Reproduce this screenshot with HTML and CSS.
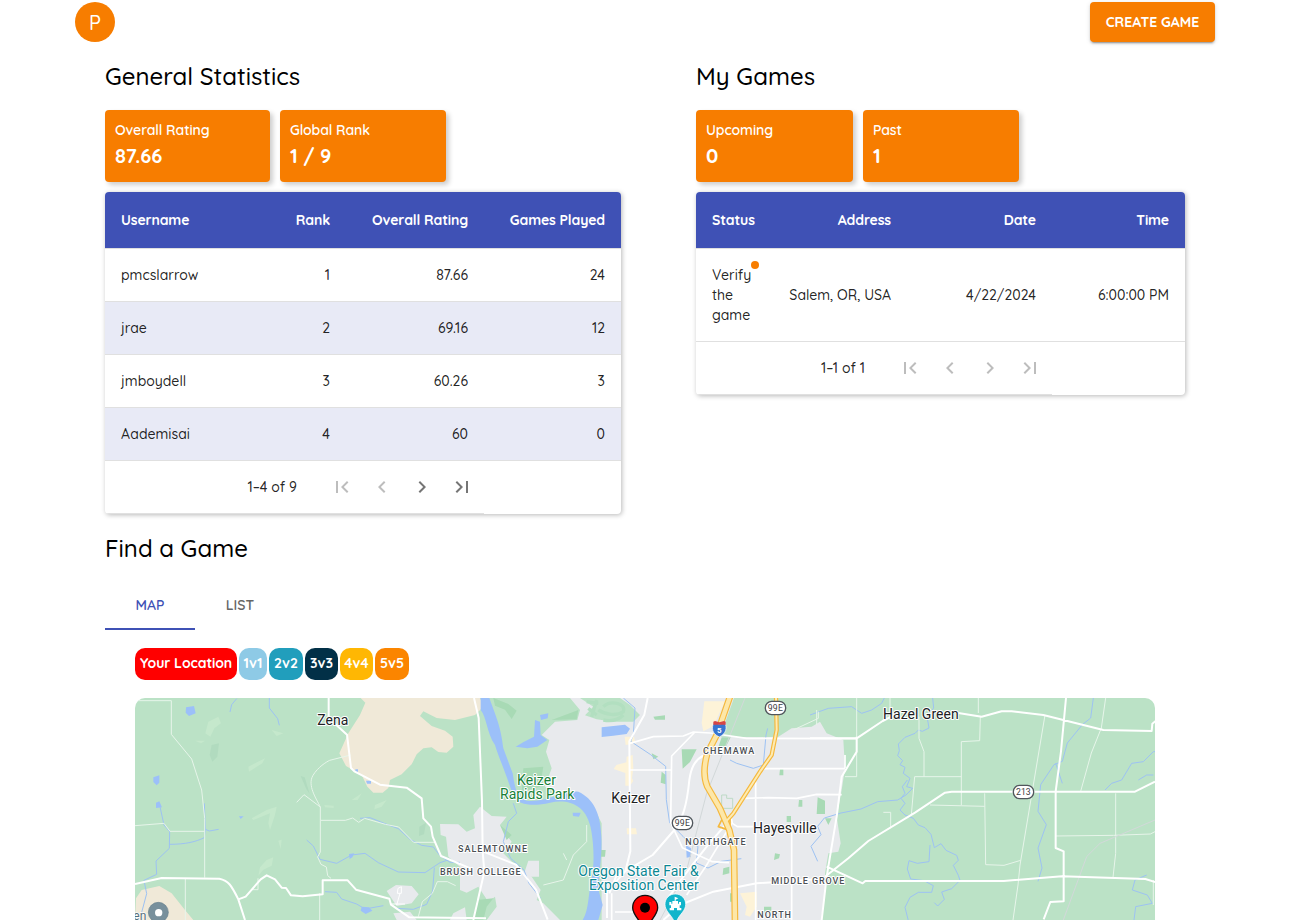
FILE: index.html
```html
<!DOCTYPE html>
<html lang="en">
<head>
<meta charset="utf-8">
<title>Player Dashboard</title>
<link rel="stylesheet" href="styles.css">
</head>
<body>
<svg width="0" height="0" class="sprite" aria-hidden="true">
  <symbol id="first" viewBox="0 0 24 24"><path d="M18.41 16.59L13.82 12l4.59-4.59L17 6l-6 6 6 6zM6 6h2v12H6z"/></symbol>
  <symbol id="prev" viewBox="0 0 24 24"><path d="M15.41 16.59L10.83 12l4.58-4.59L14 6l-6 6 6 6z"/></symbol>
  <symbol id="next" viewBox="0 0 24 24"><path d="M8.59 16.59L13.17 12 8.59 7.41 10 6l6 6-6 6z"/></symbol>
  <symbol id="last" viewBox="0 0 24 24"><path d="M5.59 7.41L10.18 12l-4.59 4.59L7 18l6-6-6-6zM16 6h2v12h-2z"/></symbol>
</svg>
<header class="topbar">
  <div class="avatar">P</div>
  <button class="create">CREATE GAME</button>
</header>
<main class="content">
  <div class="panels">
    <section>
      <h2 class="title">General Statistics</h2>
      <div class="cards cards-left">
        <div class="card"><span class="label">Overall Rating</span><strong>87.66</strong></div>
        <div class="card"><span class="label">Global Rank</span><strong>1 / 9</strong></div>
      </div>
      <div class="table ranks">
        <div class="row head"><span>Username</span><span>Rank</span><span>Overall Rating</span><span>Games Played</span></div>
        <div class="row"><span>pmcslarrow</span><span>1</span><span>87.66</span><span>24</span></div>
        <div class="row tint"><span>jrae</span><span>2</span><span>69.16</span><span>12</span></div>
        <div class="row"><span>jmboydell</span><span>3</span><span>60.26</span><span>3</span></div>
        <div class="row tint"><span>Aademisai</span><span>4</span><span>60</span><span>0</span></div>
        <div class="pager pager-left"><span>1–4 of 9</span>
          <button class="nav off"><svg><use href="#first"/></svg></button><button class="nav off"><svg><use href="#prev"/></svg></button><button class="nav"><svg><use href="#next"/></svg></button><button class="nav"><svg><use href="#last"/></svg></button>
        </div>
      </div>
    </section>
    <section>
      <h2 class="title">My Games</h2>
      <div class="cards cards-right">
        <div class="card"><span class="label">Upcoming</span><strong>0</strong></div>
        <div class="card"><span class="label">Past</span><strong>1</strong></div>
      </div>
      <div class="table games">
        <div class="row head"><span>Status</span><span>Address</span><span>Date</span><span>Time</span></div>
        <div class="row tall"><span><span class="status">Verify<br>the<br>game<i class="dot"></i></span></span><span>Salem, OR, USA</span><span>4/22/2024</span><span>6:00:00 PM</span></div>
        <div class="pager pager-right"><span>1–1 of 1</span>
          <button class="nav off"><svg><use href="#first"/></svg></button><button class="nav off"><svg><use href="#prev"/></svg></button><button class="nav off"><svg><use href="#next"/></svg></button><button class="nav off"><svg><use href="#last"/></svg></button>
        </div>
      </div>
    </section>
  </div>
  <h2 class="title">Find a Game</h2>
  <nav class="tabs"><span class="tab active">MAP</span><span class="tab">LIST</span></nav>
  <div class="legend"><span class="chip you">Your Location</span><span class="chip one">1v1</span><span class="chip two">2v2</span><span class="chip three">3v3</span><span class="chip four">4v4</span><span class="chip five">5v5</span></div>
  <svg class="map" viewBox="15 24 3060 666">
    <rect x="15" y="24" width="3060" height="666" fill="#bbe2c6"/>
    <!-- subtle relief -->
    <g fill="#c5e8cc">
      <path d="M235 95l30-15 8 20-20 15-12 25-15-10zM355 230l50-25-8 15-40 25zM365 385l45-25 30-10-5 25-15 45-5-20 5-30-50 20zM410 510l20-8-5 25-25 12-15 18 5-25zM735 345l35-15-15 20-22 8zM195 152h30l-12 8zM445 452l10-3-3 28zM425 120l35 10-20 8zM665 330l30-20-12 20zM583 345l28 2v7l-26-2z"/>
    </g>
    <g fill="#b1dbbf"><path d="M245 165l22-5-5 40-15 15-8-20zM512 258l12 4 15 50-10-15zM868 410l20-12-6 35-15 5z"/></g>
    <!-- farmland -->
    <g fill="#f0e9d8">
      <path d="M692 24L706 38 690 75 655 130 628 190 648 228 695 255 712 290 730 308 758 308 775 294 780 270 815 253 845 223 860 193 880 175 905 172 925 186 950 188 970 170 968 140 945 122 905 108 870 78 880 64 920 84 975 90 1035 75 1060 50 1050 24z"/>
      <path d="M18 625L35 600 88 588 125 610 165 660 190 690H15z"/>
    </g>
    <!-- built-up land -->
    <g fill="#e8eaed">
      <path d="M1050 350L1030 375 1035 415 1010 425 985 403 930 402 932 435 948 440 955 500 990 530 990 600 1010 608 1045 590 1075 635 1095 620 1100 650 1070 690H1290L1240 640 1220 630 1232 600 1205 560 1150 520 1120 490 1145 455 1125 430 1110 405 1130 380 1085 378z"/>
      <path d="M770 603L798 585 845 588 866 613 845 640 800 648zM1195 512h32v48h-48zM790 670l50-5 20 25h-60zM960 690l10-20 35-18 5 38z"/>
      <path d="M1470 24L1500 45 1530 75 1510 95 1450 95 1400 88 1365 76 1390 50 1350 24H1320L1350 60 1342 90 1275 95 1250 120 1235 135 1258 150 1248 185 1265 235 1245 290 1285 310 1340 310 1390 350 1415 400 1415 690H2073L2085 600 2085 550 2095 490 2125 485 2132 460 2120 380 2135 300 2145 235 2140 150 2090 130 2070 95 2045 110 1985 115 1945 140 1880 142 1770 140 1812 24z"/>
    </g>
    <!-- commercial patches -->
    <g fill="#fdf3d8">
      <path d="M1723 34h62l-35 75-30 15-5-25zM1484 140h28l5 20-30 5zM1490 200l18-5 2 40-4 30 4 8-10 14h-14v-38l-35-12 8-12 30-8zM1490 415h28l3 18h-30zM1830 610l50-5v45l-20 30-15-5 5-25z"/>
    </g>
    <!-- parks -->
    <g fill="#a8dab5">
      <path d="M1090 24l45 18 25 20-15 25-20-28-30-12zM1180 235l60-5-10 60-55 15zM1265 90l80-30-5 28zM1655 178h45l-20 38-22 20zM1775 142h27l-15 30-25 8zM1595 245l12 10v28l-15-5zM1570 80l35-4v13h-30zM1565 190l20 10-15 8zM1950 238h10v18h-12zM2007 330h10v20h-12zM2063 322l22 10v40h-25zM1970 378h13v18h-13zM1935 490l15 3-3 12-15 5zM1780 535l18-5v20l-20 5zM1412 480h15l-2 20h-12zM1040 630l50-5-20 25-10 40h-30zM1800 610h10v25h-10zM1902 650h22v20h-22z"/>
      <path d="M2085 385h20l-10 20zM1110 405l35 30-15 15z"/>
    </g>
    <path d="M1370 35l35 5m-30 15l25 20m0-45l-15 50m35-30c20-20 70-12 60 15-20 15-55 8-75-5m15 30c25 5 45 0 60-15" fill="none" stroke="#b2dfc0" stroke-width="10"/>
    <!-- water -->
    <g fill="#9cc0f9">
      <path d="M1052 24H1078C1102 90 1112 110 1120 175L1148 250C1155 295 1160 325 1190 332 1255 338 1295 300 1345 305 1390 325 1412 370 1414 440 1418 510 1400 575 1407 605L1418 645 1405 690H1358C1378 660 1375 600 1385 570 1397 500 1387 430 1380 405 1365 345 1315 325 1260 338 1210 350 1165 345 1150 320 1125 240 1105 200 1095 165 1070 130 1070 80 1052 60z"/>
      <path d="M1215 90l15 5 2 40 20 15-30 20-30 5-35-5 25-15 30-15zM1415 112l70-8 15 12-10 16-40 5-35 4v-26zM1230 75l25-5-2 15-20 5zM1328 368h24l-5 12-18-2zM1668 465l15 10v25l-13 3zM695 650l22 2 10 10-20 10-15-10zM168 52l24-4 5 22-20 8-10-10zM70 262l18-6v22l-8 8-10-10zM78 338l10-4 8 18-18 2zM657 492l16-2-6 12-8 5zM708 272h15v9h-12zM327 379h14l-9 8zM676 238h8v7h-8z"/>
    </g>
    <g fill="none" stroke="#9dc2f3" stroke-width="3" stroke-linejoin="round">
      <path d="M90 350l12 55 17 20-1 50-40 38 2 40-38 18 8 40-16 60M118 463c50 0 80-8 105-20l3-25 12 5 28-5M226 420l-3-80M320 26l-15 18-5 22M418 24v30l25 32 5 20M530 450l20 18 20 40 50 12 45-25 40-5 40 28 60 28 80 2 45-30 30-10M690 385l30-2 45 18 40 15 35 32 35 18 35 5 20 26 30 20 30 0M585 605l35 2 15 20 45 15 25 15 55-10M800 655l50 3 40-15 18-40 5-70"/>
      <path d="M1150 340l10 30-25 25-15 60 22 50 40 35 15 40 35 45M1480 24l35 30-5 80-8 20 60 40 45 35 2 100 10 70 40 40 20 20 25 10-5 50 35 15 40-20 60-8M1800 210l20 10 50 15 30-10 8-90 5-20M2040 75l55-20 70-5 30 20 30-10 30-20 10-20"/>
      <path d="M2408 24l3 30-20 25 6 35-20 10-12-4-10 10-30 12-20 20 3 20-5 15 15 15-8 12 15 8-5 18 20 15-10 25 18 5-20 20-25 15-60 5-50 22-60 12-50 15-20 25 10 25-30 35 20 45M2332 270l-15 20 8 20-12 15 12 15-15 20 15 15 25 10 15 20 20 8 18 20 10 40 20-12 15 20 32 15 5 15-15 15 15 30 5 15-25 25-30 10 8 22-20 20-10-10M2400 465l-3 50-35 5-25-8-5 25 10 30 40 5 28 15-5 20-40 0-25 15-15 30 10 40M2890 24l-8 60-25 20-45 55-15 55-25 10-40 60-8 80 25 40-25 70 12 60-12 40M2777 220l20 60M2925 300l20-20 30-10 30-50 35-5 30-30h30M3025 270l25-15h20M3050 555l-35 15-8 30 45 15 15 25-50 10-5 40"/>
    </g>
    <!-- local roads -->
    <g fill="none" stroke="#e7f5ea" stroke-width="3">
      <path d="M15 32H124V133L185 207 215 300 224 385V563M15 407L102 400 120 424H224M166 565V690M384 565v34h-18M500 337l22-23 49 37M571 351c-12-25-40-65-22-95 15-25 40-40 50-45l63-16M571 351v40h75l22-7 18 13 18-12 62 18 40 8 45 46h65M571 391v95l-8 15 10 22 16 8 4 26 10 8M569 610v80M865 680l12-45 30-25 15-35h30l25 12"/>
      <path d="M2180 24V260h-35M2280 24v40M2545 24v45M2367 80v65l15 40v75M2494 260h-140l-10 115M2551 80l-2 72-55 3v190M2400 345l164 4M2564 310l3 214 55 2 50-15M2745 75l-75 450-6 60-15 105M2927 24l-13 90-30 75-32 115M2776 438l175-2 110-4 20-10M2957 310v180l-8 72M2260 367h22v48M2060 60v45M1990 120l75-35v-20M3070 570v75"/>
      <path d="M1370 405v50l-40 40-30 75-60 15M1300 490l10 20"/>
    </g>
    <g fill="none" stroke="#d2d8d9" stroke-width="3"><path d="M1845 24L1730 310 1670 540 1590 690M2800 690l70-190 40-40 165-70"/><path d="M1775 315h15v10h18v30h-33z" stroke="#bddac6"/></g>
    <g fill="none" stroke="#fff" stroke-width="3" stroke-linejoin="round"><path d="M804 595l10-5v20h-12zM810 610l-10 35M780 642h45"/></g>
    <g fill="none" stroke="#fff" stroke-width="5" stroke-linejoin="round">
      <path d="M1500 160l70-20 90-2 30-12 50 3 110 16 330 1M1695 126l-70 72-3 200 35 75 90 42 50 3M1497 240h125M1900 236h245M1840 325l75-2 85 2 60-12 75 1M1877 275v415M1985 410v280M1877 410h-55l-15-10-5-25M2145 235v-40"/>
      <path d="M1445 690V610M1455 666h70M1670 615l60-90 75-125"/>
    </g>
    <!-- main roads -->
    <g fill="none" stroke="#fff" stroke-width="6" stroke-linejoin="round">
      <path d="M596 24v60l55 50 12 100 10 10 77 40 80 9 45 32 5 60 23 25 5 30 25 58 90 38M15 582l80-18 173 2c28 6 36 20 57 62l20 62M325 628l22-8 45-52 18-12 25 12 20 25 13 1 15 22 35 3 60-6V571h75l25 28 100 27 5 18 55 38 230 3"/>
      <path d="M1032 24l14 60 10 250 2 150 100 40 60 75 35 90M1058 485l5 60-33 145M1553 24l-10 50-45 80 3 330-15 60-55 60v80M1723 195c-30 15-40 40-45 75-8 80-20 115-45 150l-65 75-110 65-20 50M1600 690l50-45 100-40 130-25 180-12M1790 400l-60 70-70 90-50 70"/>
      <path d="M2040 145h140l78-52 45-23M2485 69l70 11 60-16 30 0 95 11 180 45 145 3 2-22 15-12M2808 24l-15 160-16 120v170l24 10v150l-40 2-20 52M3075 275l-60 30H2465l-20 3-90 60-140 85-60 52-70 55M2075 690l15-130 30-180 15-120 45-75v-45M2090 530l108 50 8-7h415l175-14 250 8 32 10"/>
    </g>
    <!-- highways -->
    <g fill="none" stroke-linejoin="round" stroke-linecap="round">
      <path d="M1800 20L1760 135 1732 190Q1715 250 1732 290L1770 355 1798 420 1812 480 1815 700" stroke="#f5b83d" stroke-width="20"/>
      <path d="M1938 20l2 100-15 75-35 50-80 125-22 25" stroke="#f5b83d" stroke-width="13"/>
      <path d="M1775 390l-10 20 25 8M1800 380v30" stroke="#f5b83d" stroke-width="5"/>
      <path d="M1938 20l2 100-15 75-35 50-80 125-22 25" stroke="#fdebb2" stroke-width="6"/>
      <path d="M1800 20L1760 135 1732 190Q1715 250 1732 290L1770 355 1798 420 1812 480 1815 700" stroke="#fde7a8" stroke-width="13"/>
    </g>
    <!-- shields -->
    <g fill="#fff" stroke="#50565c" stroke-width="4">
      <rect x="1906" y="34" width="61" height="40" rx="19"/><rect x="1627" y="379" width="61" height="40" rx="19"/><rect x="2650" y="286" width="61" height="40" rx="19"/>
    </g>
    <path d="M1751 98q17 8 34 0c6 15 5 32-17 43-24-11-23-28-17-43z" fill="#3875d0" stroke="#fff" stroke-width="2"/><path d="M1750 95l5-2 13 4 14-4 5 2v9h-37z" fill="#d64545"/>
    <g class="shield">
      <text x="1936" y="63" textLength="45">99E</text><text x="1657" y="408" textLength="45">99E</text><text x="2680" y="315" textLength="44">213</text>
      <text x="1768" y="130" class="five-text">5</text>
    </g>
    <g class="town">
      <text x="562" y="105" textLength="93">Zena</text><text x="1444" y="339" textLength="116">Keizer</text><text x="1869" y="430" textLength="191">Hayesville</text><text x="2259" y="87" textLength="227">Hazel Green</text>
    </g>
    <g class="park"><text x="1161" y="285" textLength="117">Keizer</text><text x="1110" y="327" textLength="223">Rapids Park</text></g>
    <g class="poi"><text x="1345" y="559" textLength="361">Oregon State Fair &amp;</text><text x="1377" y="600" textLength="329">Exposition Center</text></g>
    <g class="district">
      <text x="984" y="486" textLength="207">SALEMTOWNE</text><text x="930" y="555" textLength="242">BRUSH COLLEGE</text><text x="1719" y="192" textLength="154">CHEMAWA</text><text x="1666" y="465" textLength="181">NORTHGATE</text><text x="1924" y="582" textLength="219">MIDDLE GROVE</text><text x="1882" y="684" textLength="101">NORTH</text>
    </g>
    <text x="10" y="689" class="partial">en</text>
    <circle cx="85" cy="667" r="30" fill="#78909c" stroke="#657f8c" stroke-width="2"/><circle cx="86" cy="668" r="11" fill="#fff"/>
    <path d="M1545 616c-21 0-37 16-37 37 0 15 11 27 21 42h33c10-15 21-27 21-42 0-21-17-37-38-37z" fill="#f00" stroke="#111" stroke-width="4"/><circle cx="1545" cy="653" r="15"/>
    <path d="M1636 612c-18 0-31 13-31 31 0 20 18 30 27 50h8c8-20 27-30 27-50 0-18-13-31-31-31z" fill="#12b5cb" stroke="#fff" stroke-width="2"/>
    <path d="M1618 636h6v5h23v-5h6v10h-4v8h5v7h-13v-7h-9v7h-13v-7h4v-8h-5zM1627 641v-8h17v8zM1634 633v-13l11 5-8 4v4z" fill="#fff"/>
  </svg>
</main>
</body>
</html>
```
FILE: styles.css
```css
* { box-sizing: border-box; }
html, body { height: 920px; overflow: hidden; }
body { margin: 0; background: #fff; color: #000; font-family: Quicksand, Lato, "Open Sans", sans-serif; font-size: 14px; }
button { font: inherit; border: 0; padding: 0; background: none; }
.sprite { display: block; }
.topbar { display: flex; justify-content: space-between; padding: 2px 84px 0 75px; height: 60px; }
.avatar { width: 40px; height: 40px; border-radius: 50%; background: #f77d00; color: #fff; display: grid; place-items: center; font-size: 20px; font-weight: 500; }
.create { width: 125px; height: 40px; border-radius: 4px; background: #f77d00; color: #fff; font-weight: 700; box-shadow: 0 3px 1px -2px rgba(0,0,0,.2), 0 2px 2px rgba(0,0,0,.14), 0 1px 5px rgba(0,0,0,.12); }
.content { padding: 0 114px 0 105px; }
.panels { display: grid; grid-template-columns: 516px 489px; justify-content: space-between; height: 472px; }
.title { margin: 0; font-size: 24px; line-height: 32px; font-weight: 500; white-space: nowrap; }
.cards { display: grid; gap: 10px; padding: 18px 0 10px; }
.cards-left { grid-template-columns: 165px 166px; }
.cards-right { grid-template-columns: 157px 156px; }
.card { height: 72px; padding: 10px; background: #f77d00; color: #fff; border-radius: 4px; box-shadow: 3px 3px 5px rgba(0,0,0,.2); display: flex; flex-direction: column; }
.label { line-height: 20px; font-weight: 600; letter-spacing: -.1px; }
.card strong { font-size: 20px; line-height: 32px; letter-spacing: -.1px; }
.table { border-radius: 4px; overflow: hidden; box-shadow: 1px 1px 5px rgba(0,0,0,.28); color: rgba(0,0,0,.87); background: #fff; font-weight: 500; line-height: 20px; }
.row { display: grid; height: 53px; align-items: center; border-bottom: 1px solid #e0e0e0; text-align: right; }
.row > span { padding: 0 16px; white-space: nowrap; }
.row > span:first-child { text-align: left; }
.ranks .row { grid-template-columns: 120px 121px 138px 137px; }
.games .row { grid-template-columns: 77px 134px 145px 133px; }
.row.head { height: 57px; background: #3f51b5; background-clip: padding-box; color: #fff; font-weight: 700; letter-spacing: -.12px; }
.row.tint { background: #e8eaf6; }
.row.tall { height: 93px; }
.status { position: relative; display: inline-block; }
.dot { position: absolute; width: 8px; height: 8px; border-radius: 50%; background: #f77d00; right: -8px; top: -4px; }
.pager { display: flex; height: 53px; align-items: center; justify-content: flex-end; border-bottom: 1px solid #e0e0e0; padding-right: 2px; }
.pager span { margin-right: 25px; }
.pager-left { width: 379px; }
.pager-right { width: 356px; }
.nav { width: 40px; height: 40px; display: grid; place-items: center; color: #757575; }
.nav.off { color: #bdbdbd; }
.nav svg { width: 24px; height: 24px; fill: currentColor; }
.tabs { display: flex; margin-top: 17px; }
.tab { width: 90px; height: 49px; line-height: 49px; text-align: center; color: #666; font-weight: 600; }
.tab.active { color: #3f51b5; border-bottom: 2px solid #3f51b5; }
.legend { display: flex; gap: 2px; padding: 18px 0 18px 30px; }
.chip { height: 32px; line-height: 30px; border-radius: 10px; color: #fff; font-weight: 700; text-align: center; width: 34px; white-space: nowrap; }
.chip.you { width: 102px; background: #f00; letter-spacing: -.1px; }
.chip.one { width: 28px; background: #8ecae6; }
.chip.two { background: #219ebc; }
.chip.three { width: 33px; background: #023047; }
.chip.four { width: 33px; background: #ffb703; }
.chip.five { background: #fb8500; }
.map { display: block; width: 1020px; height: 222px; margin-left: 30px; border-radius: 10px 10px 0 0; font-family: Roboto, sans-serif; }
.map text { paint-order: stroke; stroke: #fff; stroke-width: 6px; stroke-linejoin: round; }
.town { font-size: 42px; fill: #202124; }
.park { font-size: 42px; fill: #188038; }
.poi { font-size: 42px; fill: #0b8793; }
.map .partial { font-size: 36px; fill: #546e7a; stroke-width: 4px; }
.district { font-size: 27px; font-weight: 500; fill: #4b4f54; }
.shield { font-size: 26px; fill: #3c4043; text-anchor: middle; }
.shield text { stroke: none; }
.shield .five-text { fill: #fff; font-weight: 700; font-size: 24px; }
```
